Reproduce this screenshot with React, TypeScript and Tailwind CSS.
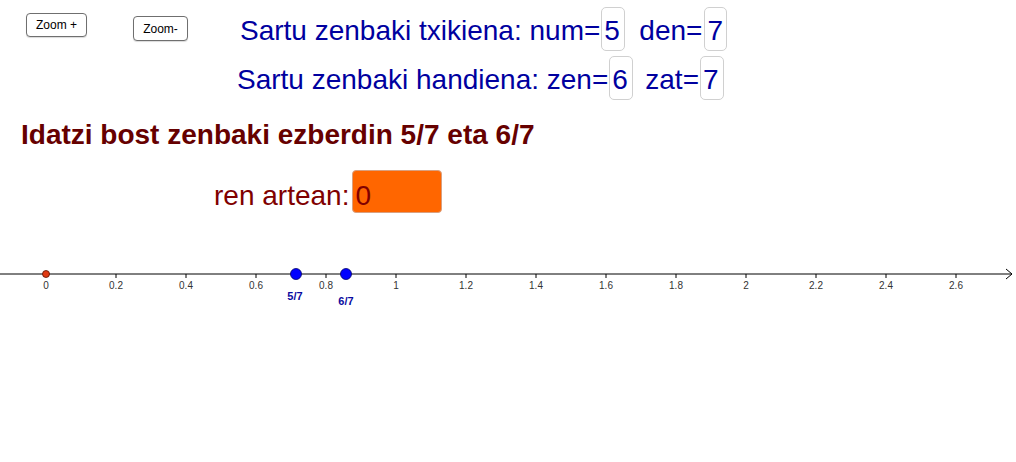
const ticks = [0.2, 0.4, 0.6, 0.8, 1, 1.2, 1.4, 1.6, 1.8, 2, 2.2, 2.4, 2.6];
const ORIGIN = 46;
const UNIT = 350;
const AXIS_Y = 61;

function NumberField({ value, className = '' }: { value: string; className?: string }) {
  return (
    <span
      className={`inline-block h-[44px] border border-[#d0d0d0] rounded-[5px] pt-[7px] pl-[2px] leading-[32px] text-[#00009f] ${className}`}
    >
      {value}
    </span>
  );
}

function ZoomButton({ label, className = '' }: { label: string; className?: string }) {
  return (
    <button
      className={`flex items-center justify-center bg-white border border-[#6f6f6f] rounded-[4px] text-[12px] text-black leading-none shadow-[0_1px_1px_rgba(0,0,0,0.15)] ${className}`}
    >
      {label}
    </button>
  );
}

function NumberLine() {
  const x = (v: number) => ORIGIN + v * UNIT;
  return (
    <svg width="1016" height="250" className="block">
      <line x1="0" y1={AXIS_Y} x2="1012" y2={AXIS_Y} stroke="#000" strokeWidth="1" />
      <polyline
        points={`1006,${AXIS_Y - 5} 1012,${AXIS_Y} 1006,${AXIS_Y + 5}`}
        fill="none"
        stroke="#000"
        strokeWidth="1"
      />
      {ticks.map((t) => (
        <g key={t}>
          <line x1={x(t)} y1={AXIS_Y} x2={x(t)} y2={AXIS_Y + 4} stroke="#000" strokeWidth="1" />
          <text
            x={x(t)}
            y={AXIS_Y + 15}
            textAnchor="middle"
            fontSize="10"
            fill="#333"
            fontFamily="Liberation Sans, Arial, sans-serif"
          >
            {t}
          </text>
        </g>
      ))}
      <text
        x={ORIGIN}
        y={AXIS_Y + 15}
        textAnchor="middle"
        fontSize="10"
        fill="#333"
        fontFamily="Liberation Sans, Arial, sans-serif"
      >
        0
      </text>
      <circle cx={ORIGIN} cy={AXIS_Y} r="3.5" fill="#e13a12" stroke="#5a1000" strokeWidth="0.8" />
      <circle cx={x(5 / 7)} cy={AXIS_Y} r="5.5" fill="#0000ff" stroke="#00006a" strokeWidth="0.8" />
      <circle cx={x(6 / 7)} cy={AXIS_Y} r="5.5" fill="#0000ff" stroke="#00006a" strokeWidth="0.8" />
      <text
        x={x(5 / 7) - 1}
        y={AXIS_Y + 26}
        textAnchor="middle"
        fontSize="11"
        fontWeight="bold"
        fill="#0a0aa0"
        fontFamily="Liberation Sans, Arial, sans-serif"
      >
        5/7
      </text>
      <text
        x={x(6 / 7)}
        y={AXIS_Y + 31}
        textAnchor="middle"
        fontSize="11"
        fontWeight="bold"
        fill="#0a0aa0"
        fontFamily="Liberation Sans, Arial, sans-serif"
      >
        6/7
      </text>
    </svg>
  );
}

export default function App() {
  return (
    <div className="w-[1016px] h-[462px] bg-white overflow-hidden font-['Liberation_Sans',Arial,sans-serif]">
      <div className="pt-[7px] flex items-start">
        <ZoomButton label="Zoom +" className="ml-[26px] mt-[6px] w-[61px] h-[24px]" />
        <ZoomButton label="Zoom-" className="ml-[46px] mt-[9px] w-[55px] h-[25px]" />
        <div className="ml-[52px] flex items-baseline text-[28px] leading-[32px] text-[#00009f]">
          <span>Sartu zenbaki txikiena: num=</span>
          <NumberField value="5" className="w-[24px] ml-[1px]" />
          <span className="ml-[14px]">den=</span>
          <NumberField value="7" className="w-[23px] ml-[2px]" />
        </div>
      </div>

      <div className="mt-[5px] pl-[237px] flex items-baseline text-[28px] leading-[32px] text-[#00009f]">
        <span>Sartu zenbaki handiena: zen=</span>
        <NumberField value="6" className="w-[24px] ml-[1px] h-[43px]" />
        <span className="ml-[12px]">zat=</span>
        <NumberField value="7" className="w-[24px] ml-[1px] h-[43px]" />
      </div>

      <h1 className="mt-[19px] pl-[21px] text-[28px] leading-[32px] font-bold text-[#660000]">
        Idatzi bost zenbaki ezberdin 5/7 eta 6/7
      </h1>

      <div className="mt-[19px] pl-[214px] flex items-baseline text-[28px] leading-[32px] text-[#800000]">
        <span>ren artean:</span>
        <span className="ml-[3px] inline-block w-[90px] h-[43px] pt-[9px] pl-[2px] bg-[#ff6600] border border-[#d9a080] rounded-[4px] leading-[32px]">
          0
        </span>
      </div>

      <NumberLine />
    </div>
  );
}
